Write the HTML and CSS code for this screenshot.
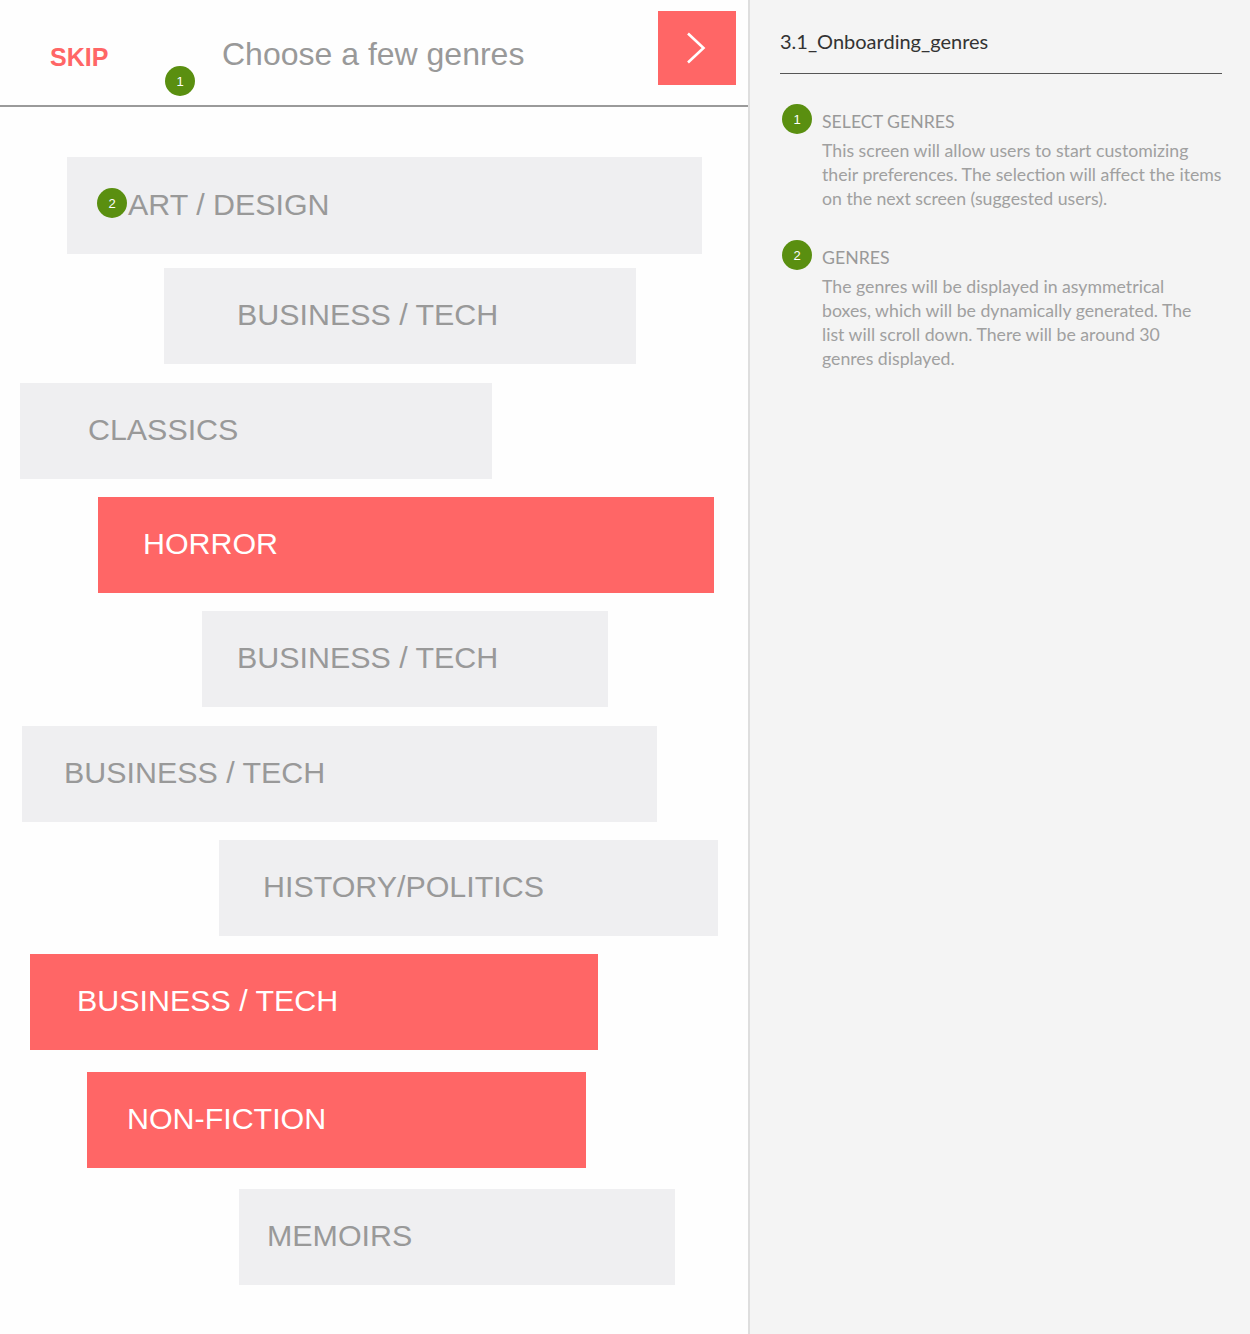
FILE: index.html
```html
<!DOCTYPE html>
<html lang="en">
<head>
<meta charset="utf-8">
<title>3.1_Onboarding_genres</title>
<link rel="stylesheet" href="styles.css">
</head>
<body>
<div class="page">
  <main class="screen">
    <header class="topbar">
      <a class="skip" href="#">SKIP</a>
      <h1 class="title">Choose a few genres</h1>
      <button class="next" aria-label="Next">
        <svg width="20" height="32" viewBox="0 0 20 32"><path d="M2 1.5 L17.5 16 L2 30.5" fill="none" stroke="#fff" stroke-width="2.6" stroke-linejoin="miter"/></svg>
      </button>
      <span class="badge badge-top">1</span>
    </header>
    <ul class="genres">
      <li class="genre g1"><span class="badge badge-inline">2</span>ART / DESIGN</li>
      <li class="genre g2">BUSINESS / TECH</li>
      <li class="genre g3">CLASSICS</li>
      <li class="genre g4 selected">HORROR</li>
      <li class="genre g5">BUSINESS / TECH</li>
      <li class="genre g6">BUSINESS / TECH</li>
      <li class="genre g7">HISTORY/POLITICS</li>
      <li class="genre g8 selected">BUSINESS / TECH</li>
      <li class="genre g9 selected">NON-FICTION</li>
      <li class="genre g10">MEMOIRS</li>
    </ul>
  </main>
  <aside class="notes">
    <h2 class="notes-title">3.1_Onboarding_genres</h2>
    <section class="note first">
      <span class="badge">1</span>
      <div class="note-body">
        <h3 class="note-head">SELECT GENRES</h3>
        <p class="note-text">This screen will allow users to start customizing<br>their preferences. The selection will affect the items<br>on the next screen (suggested users).</p>
      </div>
    </section>
    <section class="note">
      <span class="badge">2</span>
      <div class="note-body">
        <h3 class="note-head">GENRES</h3>
        <p class="note-text">The genres will be displayed in asymmetrical<br>boxes, which will be dynamically generated. The<br>list will scroll down. There will be around 30<br>genres displayed.</p>
      </div>
    </section>
  </aside>
</div>
</body>
</html>
```
FILE: styles.css
```css
* { box-sizing: border-box; }
html, body { margin: 0; padding: 0; }
body {
  background: #f4f4f4;
  font-family: "Liberation Sans", Arial, Helvetica, sans-serif;
}
.page {
  display: flex;
  width: 1250px;
  min-height: 1334px;
}
.screen {
  width: 750px;
  flex: none;
  min-height: 1334px;
  background: #fefefe;
  border-right: 2px solid #dedede;
}
.topbar {
  position: relative;
  display: flex;
  align-items: flex-start;
  height: 107px;
  border-bottom: 2px solid #9a9a9a;
}
.skip {
  width: 222px;
  padding-left: 50px;
  margin-top: 45px;
  font-size: 25px;
  line-height: 25px;
  font-weight: bold;
  color: #ff6666;
  text-decoration: none;
}
.title {
  margin: 38px 0 0 0;
  font-size: 32px;
  line-height: 32px;
  font-weight: normal;
  color: #999999;
}
.next {
  margin: 11px 12px 0 auto;
  width: 78px;
  height: 74px;
  padding: 0;
  border: 0;
  background: #ff6666;
  display: flex;
  align-items: center;
  justify-content: center;
}
.next svg { margin-left: -2px; margin-top: 0; }
.badge {
  display: inline-flex;
  align-items: center;
  justify-content: center;
  flex: none;
  width: 30px;
  height: 30px;
  border-radius: 50%;
  background: #5a8f10;
  color: #fff;
  font-family: "Liberation Sans", Arial, sans-serif;
  font-size: 13px;
  line-height: 1;
}
.badge-top {
  position: absolute;
  left: 165px;
  top: 66px;
}
.genres {
  list-style: none;
  margin: 0;
  padding: 0 0 40px 0;
}
.genre {
  display: flex;
  align-items: center;
  height: 96px;
  padding-bottom: 3px;
  background: #efeff1;
  color: #999999;
  font-size: 30.4px;
  white-space: nowrap;
}
.genre.selected {
  background: #ff6666;
  color: #ffffff;
}
.badge-inline { margin-right: 1px; margin-top: -2px; }
.g1  { margin: 50px 0 0 67px;  width: 635px; height: 97px; padding-left: 30px; }
.g2  { margin: 14px 0 0 164px; width: 472px; padding-left: 73px; }
.g3  { margin: 19px 0 0 20px;  width: 472px; padding-left: 68px; }
.g4  { margin: 18px 0 0 98px;  width: 616px; padding-left: 45px; }
.g5  { margin: 18px 0 0 202px; width: 406px; padding-left: 35px; }
.g6  { margin: 19px 0 0 22px;  width: 635px; padding-left: 42px; }
.g7  { margin: 18px 0 0 219px; width: 499px; padding-left: 44px; }
.g8  { margin: 18px 0 0 30px;  width: 568px; padding-left: 47px; }
.g9  { margin: 22px 0 0 87px;  width: 499px; padding-left: 40px; }
.g10 { margin: 21px 0 0 239px; width: 436px; padding-left: 28px; }

.notes {
  flex: 1;
  padding: 28px 30px 0 30px;
  font-family: Lato, "Open Sans", sans-serif;
}
.notes-title {
  margin: 0;
  padding-bottom: 19px;
  border-bottom: 1px solid #555;
  font-size: 20px;
  line-height: 26px;
  font-weight: normal;
  color: #333;
}
.note {
  display: flex;
  align-items: flex-start;
  gap: 10px;
  padding-left: 2px;
}
.note.first { margin-top: 30px; }
.note + .note { margin-top: 29px; }
.note-head {
  margin: 6px 0 0 0;
  font-size: 17.7px;
  line-height: 24px;
  font-weight: normal;
  color: #999;
}
.note-text {
  margin: 5px 0 0 0;
  font-size: 17.7px;
  line-height: 24px;
  color: #a0a0a0;
  white-space: nowrap;
}
```
